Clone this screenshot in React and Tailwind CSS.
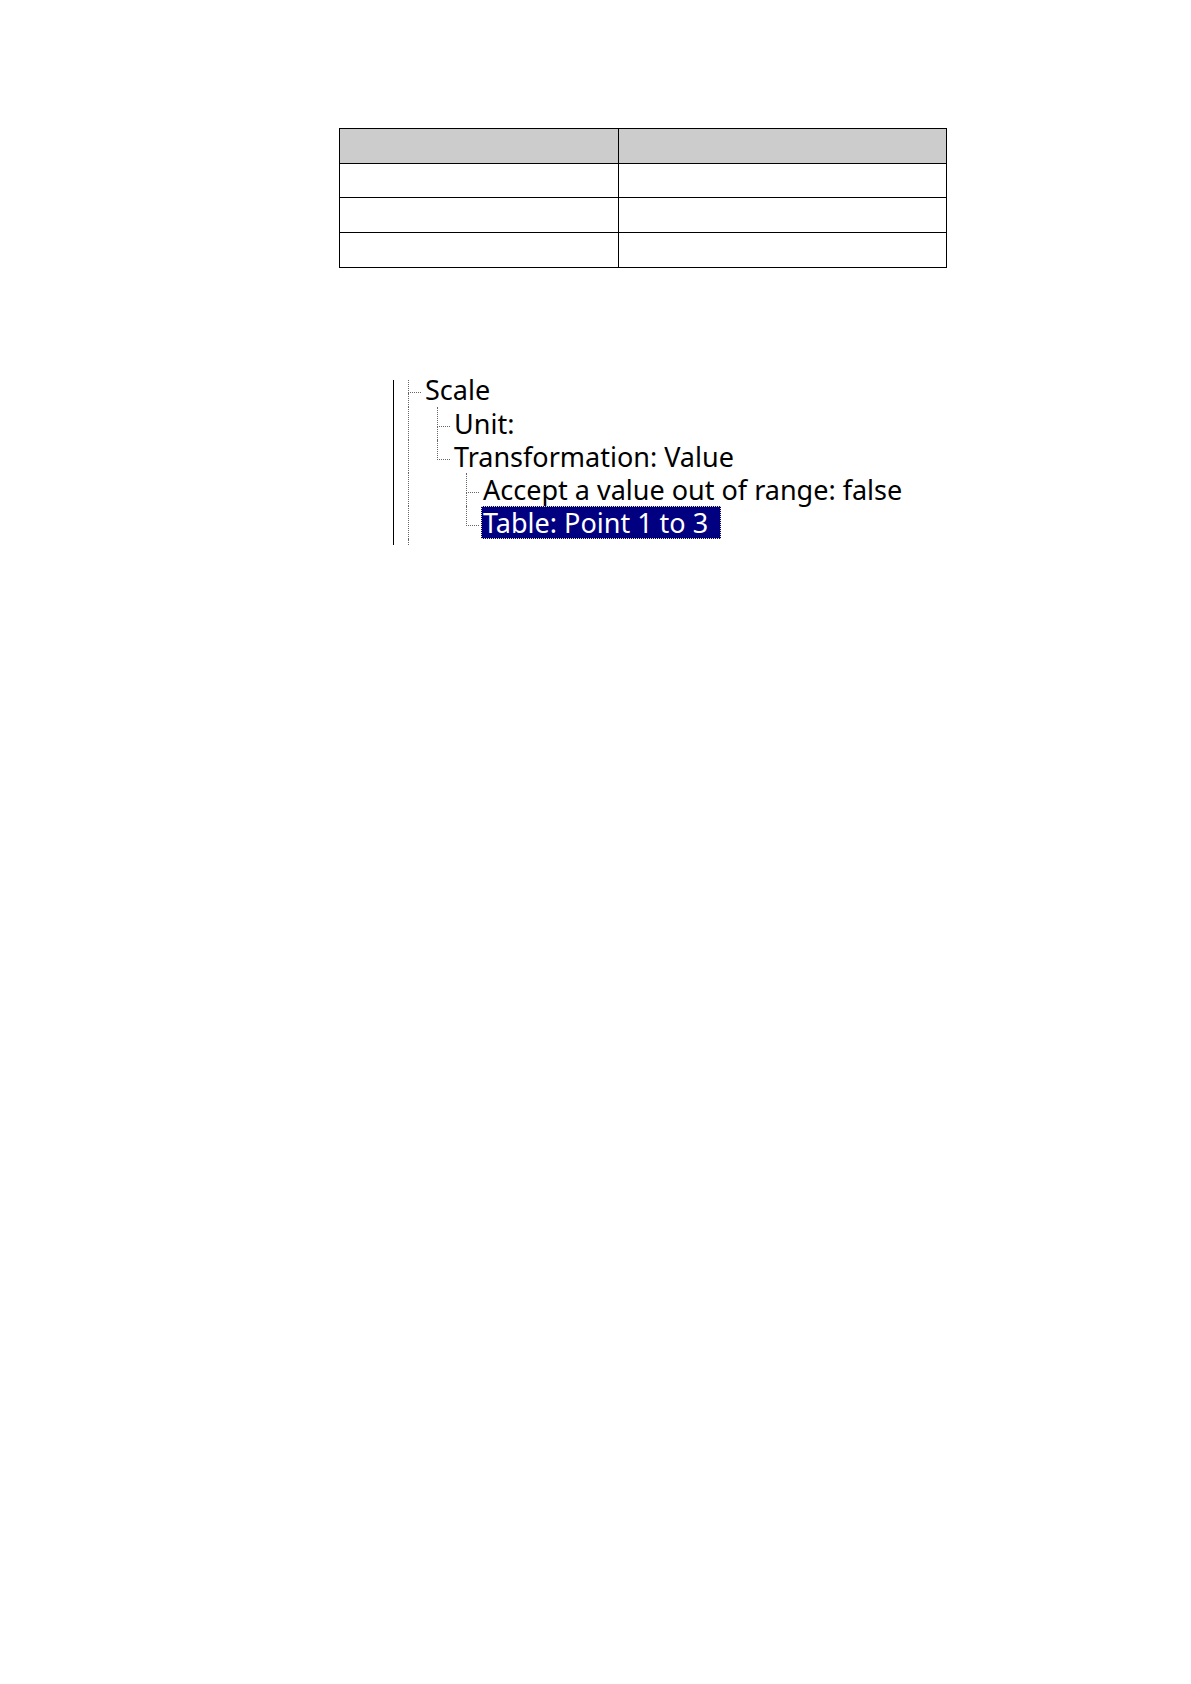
const pointRows = [1, 2, 3];

// guides: what is drawn left of the label, one entry per tree level
const treeRows = [
  { label: 'Scale', guides: ['tee'], first: true },
  { label: 'Unit:', guides: ['line', 'tee'] },
  { label: 'Transformation: Value', guides: ['line', 'end'] },
  { label: 'Accept a value out of range: false', guides: ['line', 'blank', 'tee'] },
  { label: 'Table: Point 1 to 3', guides: ['line', 'blank', 'end'], selected: true },
];

function Guide({ type, first }) {
  if (type === 'blank') {
    return <span className="w-[29px] shrink-0"></span>;
  }
  if (type === 'line') {
    return (
      <span className="w-[29px] shrink-0 flex">
        <span className="border-l border-dotted border-[#666]"></span>
      </span>
    );
  }
  return (
    <span className="w-[13px] mr-[2px] shrink-0 flex flex-col">
      <span className={`${first ? 'h-[13px]' : 'h-5'} border-l border-b border-dotted border-[#666]`}></span>
      {type === 'tee' && <span className="flex-1 border-l border-dotted border-[#666]"></span>}
    </span>
  );
}

function TreeRow({ label, guides, selected, first }) {
  const rowHeight = first ? 'h-[27px]' : 'h-[33px]';
  const leading = first ? 'leading-[18px]' : 'leading-[31px]';
  const colors = selected
    ? 'border-dotted border-[#e8e8a0] bg-[#000080] text-white'
    : 'border-transparent';

  return (
    <li role="treeitem" aria-level={guides.length} aria-selected={!!selected} className={`flex ${rowHeight}`}>
      {guides.map((type, i) => (
        <Guide key={i} type={type} first={first} />
      ))}
      <span className={`border pl-px pr-3 whitespace-nowrap ${leading} ${colors}`}>
        {label}
      </span>
    </li>
  );
}

export default function App() {
  return (
    <main className="min-h-screen bg-white pt-32 pl-[339px] pr-6 text-black">
      <table className="w-full max-w-[608px] table-fixed border-collapse border border-black">
        <thead>
          <tr className="h-[35px] bg-[#ccc]">
            <th scope="col" className="w-[46%] border border-black"></th>
            <th scope="col" className="border border-black"></th>
          </tr>
        </thead>
        <tbody>
          {pointRows.map((row) => (
            <tr key={row} className="h-[35px] first:h-[34px]">
              <td className="border border-black"></td>
              <td className="border border-black"></td>
            </tr>
          ))}
        </tbody>
      </table>

      {/* Parameter tree */}
      <div className="mt-28 ml-[54px] border-l border-black pl-[14px]">
        <ul role="tree" className="font-['Noto_Sans',sans-serif] text-[27px]">
          {treeRows.map((row) => (
            <TreeRow key={row.label} {...row} />
          ))}
          <li role="presentation" className="flex h-[6px]">
            <Guide type="line" />
          </li>
        </ul>
      </div>
    </main>
  );
}
